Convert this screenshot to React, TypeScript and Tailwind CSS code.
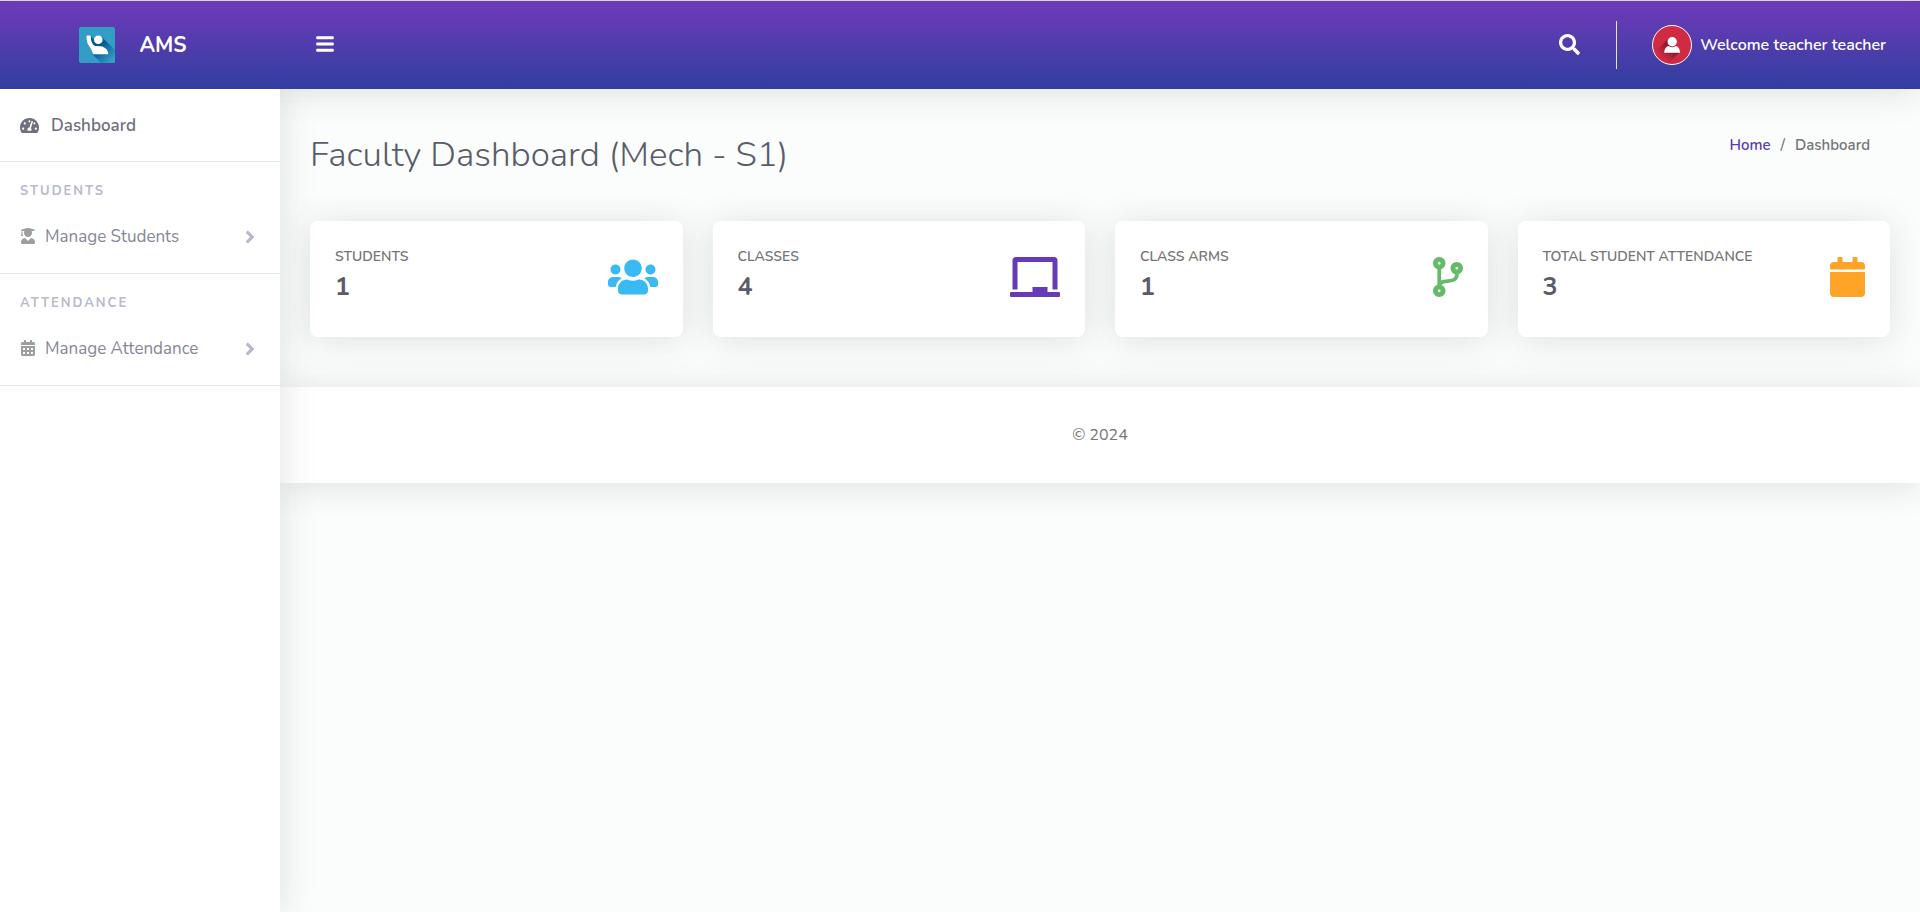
import type { ReactNode } from "react";
import {
  FaAngleRight,
  FaBars,
  FaCalendar,
  FaCalendarAlt,
  FaChalkboard,
  FaCodeBranch,
  FaSearch,
  FaTachometerAlt,
  FaUserGraduate,
  FaUsers,
} from "react-icons/fa";

function Logo() {
  return (
    <svg viewBox="0 0 36 36" className="size-9 rounded-xs" aria-hidden="true">
      <defs>
        <linearGradient id="logo-shade" gradientUnits="userSpaceOnUse" x1="15" y1="15" x2="33" y2="33">
          <stop offset="0.3" stopColor="#045a94" />
          <stop offset="1" stopColor="#349dc3" />
        </linearGradient>
      </defs>
      <rect width="36" height="36" fill="#349dc3" />
      <path d="M11.5 9L16 13.5L22.5 9.8L36 23V36H22L13.5 27.2Z" fill="url(#logo-shade)" />
      <circle cx="19.3" cy="12.7" r="4.3" fill="#fff" />
      <path
        d="M7.5 9.2Q7.5 8.5 8.3 8.5H10.9Q11.7 8.5 11.7 9.3C11.8 13.5 13 17.5 16 19L22 19.3C26 20 29 23 29.3 26.5Q29.3 27.2 28.5 27.2H14C13 24 12.5 22.5 10.5 19.5C8 16.5 7.5 13 7.5 9.2Z"
        fill="#fff"
      />
    </svg>
  );
}

function Avatar() {
  return (
    <svg viewBox="0 0 40 40" className="size-10" aria-hidden="true">
      <defs>
        <clipPath id="avatar-clip">
          <circle cx="20" cy="20" r="19" />
        </clipPath>
        <linearGradient id="avatar-shade" gradientUnits="userSpaceOnUse" x1="20" y1="20" x2="9" y2="31">
          <stop offset="0.2" stopColor="#8c1a30" />
          <stop offset="1" stopColor="#d12b43" />
        </linearGradient>
      </defs>
      <circle cx="20" cy="20" r="19.5" fill="#d12b43" />
      <path
        d="M16 14L0 30V40H15L27 28Z"
        fill="url(#avatar-shade)"
        clipPath="url(#avatar-clip)"
      />
      <circle cx="20" cy="20" r="19.5" fill="none" stroke="#fff" />
      <circle cx="20.2" cy="16.7" r="4.7" fill="#fff" />
      <path
        d="M12.2 27.8C12.2 24 14 21.5 16.6 21Q20.2 23.4 23.8 21C26.5 21.5 28 24 28 27.8Z"
        fill="#fff"
      />
    </svg>
  );
}

function MenuSection({ title, icon, label }: { title: string; icon: ReactNode; label: string }) {
  return (
    <section className="border-b border-[#e6e8f0] px-5 pt-[21px] pb-3">
      <h2 className="text-[13px] leading-4 font-bold tracking-[2px] text-[#b7b9cc] uppercase">{title}</h2>
      <a href="#" className="mt-3.5 flex h-12 items-center text-[#858796]">
        <span className="pb-0.5 text-base text-[#9e9e9e]">{icon}</span>
        <span className="ml-[9px] flex-1 text-[17px] font-normal">{label}</span>
        <FaAngleRight className="text-xl text-[#b7b9cc]" />
      </a>
    </section>
  );
}

const stats = [
  { label: "Students", value: 1, icon: <FaUsers className="h-10 w-[50px] text-[#3abaf4]" /> },
  { label: "Classes", value: 4, icon: <FaChalkboard className="h-10 w-[50px] text-[#673ab7]" /> },
  { label: "Class Arms", value: 1, icon: <FaCodeBranch className="h-10 w-[30px] text-[#66bb6a]" /> },
  { label: "Total Student Attendance", value: 3, icon: <FaCalendar className="h-10 w-[35px] text-[#ffa426]" /> },
];

export default function App() {
  return (
    <div className="flex min-h-screen flex-col border-t border-[#e0e0e0] bg-[#fafdfc] font-[Nunito,Lato,sans-serif] text-[#757575]">
      <header className="flex h-22 items-center bg-[linear-gradient(180deg,#6a3ab7_10%,#303f9f_100%)] text-white shadow-[0_3px_35px_rgba(58,59,69,0.15)]">
        <a href="#" className="flex w-70 items-center justify-center gap-6 pr-3.5">
          <Logo />
          <span className="pt-px text-[21px] font-bold">AMS</span>
        </a>
        <button type="button" aria-label="Toggle menu" className="ml-[35px] pb-0.5 text-xl">
          <FaBars />
        </button>
        <button type="button" aria-label="Search" className="ml-auto pb-0.5 text-[21px]">
          <FaSearch />
        </button>
        <div className="ml-9 h-12 w-px bg-[#e3e6f0]" />
        <a href="#" className="mr-[34px] ml-[35px] flex items-center gap-2">
          <Avatar />
          <span className="text-base font-semibold">Welcome teacher teacher</span>
        </a>
      </header>

      <div className="flex flex-1">
        <nav className="relative z-10 w-70 shrink-0 bg-white shadow-[0_3px_35px_rgba(58,59,69,0.15)] [clip-path:inset(0_-60px_0_0)]">
          <a
            href="#"
            className="flex h-[73px] items-center gap-3 border-b border-[#e6e8f0] px-5 text-[17px] font-semibold text-[#6e707e]"
          >
            <FaTachometerAlt className="text-[19px]" />
            <span className="pt-0.5">Dashboard</span>
          </a>
          <MenuSection title="Students" icon={<FaUserGraduate />} label="Manage Students" />
          <MenuSection title="Attendance" icon={<FaCalendarAlt />} label="Manage Attendance" />
        </nav>

        <main className="min-w-0 flex-1">
          <div className="px-7.5 pb-[50px]">
            <div className="flex items-start justify-between pt-[45px]">
              <h1 className="text-[35px] leading-[42px] font-light text-[#5a5c69]">Faculty Dashboard (Mech - S1)</h1>
              <ol className="flex gap-2.5 pr-5 text-[15px] font-semibold">
                <li>
                  <a href="#" className="text-[#5a3ab7]">Home</a>
                </li>
                <li aria-hidden="true">/</li>
                <li>Dashboard</li>
              </ol>
            </div>
            <div className="mt-[45px] grid grid-cols-4 gap-7.5">
              {stats.map((stat) => (
                <div
                  key={stat.label}
                  className="flex h-29 items-center justify-between rounded-lg bg-white px-[25px] shadow-[0_3px_35px_rgba(58,59,69,0.15)]"
                >
                  <div className="pb-2">
                    <div className="text-sm leading-5 font-semibold uppercase">{stat.label}</div>
                    <div className="mt-1 text-[25px] leading-8 font-bold text-[#5a5c69]">{stat.value}</div>
                  </div>
                  <div className="pb-1">{stat.icon}</div>
                </div>
              ))}
            </div>
          </div>
          <footer className="flex h-24 items-center justify-center bg-white text-base shadow-[0_3px_35px_rgba(58,59,69,0.15)]">
            © 2024
          </footer>
        </main>
      </div>
    </div>
  );
}
